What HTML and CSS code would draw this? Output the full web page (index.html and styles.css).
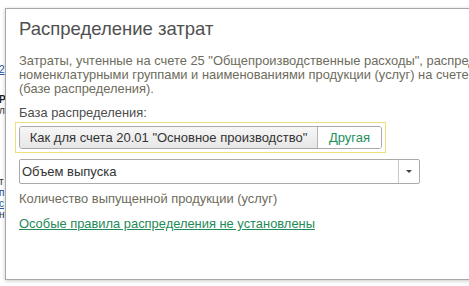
FILE: index.html
```html
<!DOCTYPE html>
<html lang="ru">
<head>
<meta charset="utf-8">
<title>Распределение затрат</title>
<link rel="stylesheet" href="styles.css">
</head>
<body>
<div class="page">
  <div class="bg">
    <div class="bg-gap g1"></div>
    <div class="bg-line link">2</div>
    <div class="bg-gap g2"></div>
    <div class="bg-line bold">Р</div>
    <div class="bg-line">л</div>
    <div class="bg-gap g3"></div>
    <div class="bg-line">т</div>
    <div class="bg-line blue">п</div>
    <div class="bg-line link">с</div>
    <div class="bg-line">н</div>
  </div>

  <div class="dialog">
    <h1 class="title">Распределение затрат</h1>
    <p class="desc">Затраты, учтенные на счете 25 "Общепроизводственные расходы", распределяются между<br>номенклатурными группами и наименованиями продукции (услуг) на счете 20.01 пропорционально<br>(базе распределения).</p>
    <div class="label">База распределения:</div>
    <div class="focus">
      <div class="seg">
        <div class="seg-item active">Как для счета 20.01 "Основное производство"</div>
        <div class="seg-item other">Другая</div>
      </div>
    </div>
    <div class="select">
      <div class="select-value">Объем выпуска</div>
      <div class="select-btn"><span class="arrow"></span></div>
    </div>
    <div class="hint">Количество выпущенной продукции (услуг)</div>
    <a class="rules" href="#">Особые правила распределения не установлены</a>
  </div>
</div>
</body>
</html>
```
FILE: styles.css
```css
* { box-sizing: border-box; }
html, body { margin: 0; padding: 0; }
body {
  width: 469px;
  height: 286px;
  overflow: hidden;
  background: #ffffff;
  font-family: "Liberation Sans", Arial, sans-serif;
}
.page {
  position: relative;
  width: 469px;
  height: 286px;
  overflow: hidden;
}
.bg {
  display: flex;
  flex-direction: column;
  width: 5px;
  overflow: hidden;
  font-size: 10px;
  color: #333;
}
.bg-gap.g1 { height: 64px; }
.bg-gap.g2 { height: 19px; }
.bg-gap.g3 { height: 60px; }
.bg-line { height: 11px; line-height: 11px; margin-left: -1px; white-space: nowrap; overflow: hidden; }
.bg-line.link { color: #2a5aa8; text-decoration: underline; }
.bg-line.blue { color: #2a4a88; }
.bg-line.bold { font-weight: bold; color: #222; }

.dialog {
  position: absolute;
  left: 5px;
  top: 8px;
  width: 480px;
  height: 272px;
  background: #ffffff;
  border: 1px solid #a8a8a8;
  box-shadow: 0 1px 4px rgba(0, 0, 0, 0.22);
  padding: 9px 0 0 13px;
  display: flex;
  flex-direction: column;
  align-items: flex-start;
  white-space: nowrap;
  overflow: hidden;
}
.title {
  margin: 0;
  font-weight: normal;
  font-size: 18.5px;
  line-height: 22px;
  color: #505050;
}
.desc {
  margin: 14px 0 0 0;
  font-size: 12.9px;
  line-height: 14px;
  color: #6e6c5c;
}
.label {
  margin-top: 10px;
  font-size: 12.9px;
  line-height: 14px;
  color: #4d4d4d;
}
.focus {
  margin: 2px 0 0 -4px;
  width: 371px;
  height: 31px;
  border: 1px solid #ece07a;
  padding: 3px;
}
.seg {
  display: flex;
  width: 363px;
  height: 23px;
  border: 1px solid #a9a9a9;
  border-radius: 3px;
  overflow: hidden;
  font-size: 13px;
}
.seg-item {
  display: flex;
  align-items: center;
  justify-content: center;
  height: 100%;
}
.seg-item.active {
  width: 298px;
  color: #333;
  background: linear-gradient(#f7f7f7, #e6e6e6);
  border-right: 1px solid #b4b4b4;
}
.seg-item.other {
  flex: 1;
  color: #22915d;
  background: #fff;
}
.select {
  margin-top: 6px;
  display: flex;
  width: 401px;
  height: 25px;
  border: 1px solid #aaaaaa;
  border-radius: 2px;
  font-size: 13px;
  color: #333;
}
.select-value {
  flex: 1;
  display: flex;
  align-items: center;
  padding-left: 2px;
}
.select-btn {
  width: 21px;
  border-left: 1px solid #c8c8c8;
  display: flex;
  align-items: center;
  justify-content: center;
}
.arrow {
  width: 0;
  height: 0;
  border-left: 3px solid transparent;
  border-right: 3px solid transparent;
  border-top: 3px solid #444;
}
.hint {
  margin-top: 8px;
  font-size: 12.9px;
  line-height: 14px;
  color: #6e6c5c;
}
.rules {
  margin-top: 11px;
  font-size: 12.9px;
  line-height: 14px;
  color: #1f8a58;
  text-decoration: underline;
}
```
